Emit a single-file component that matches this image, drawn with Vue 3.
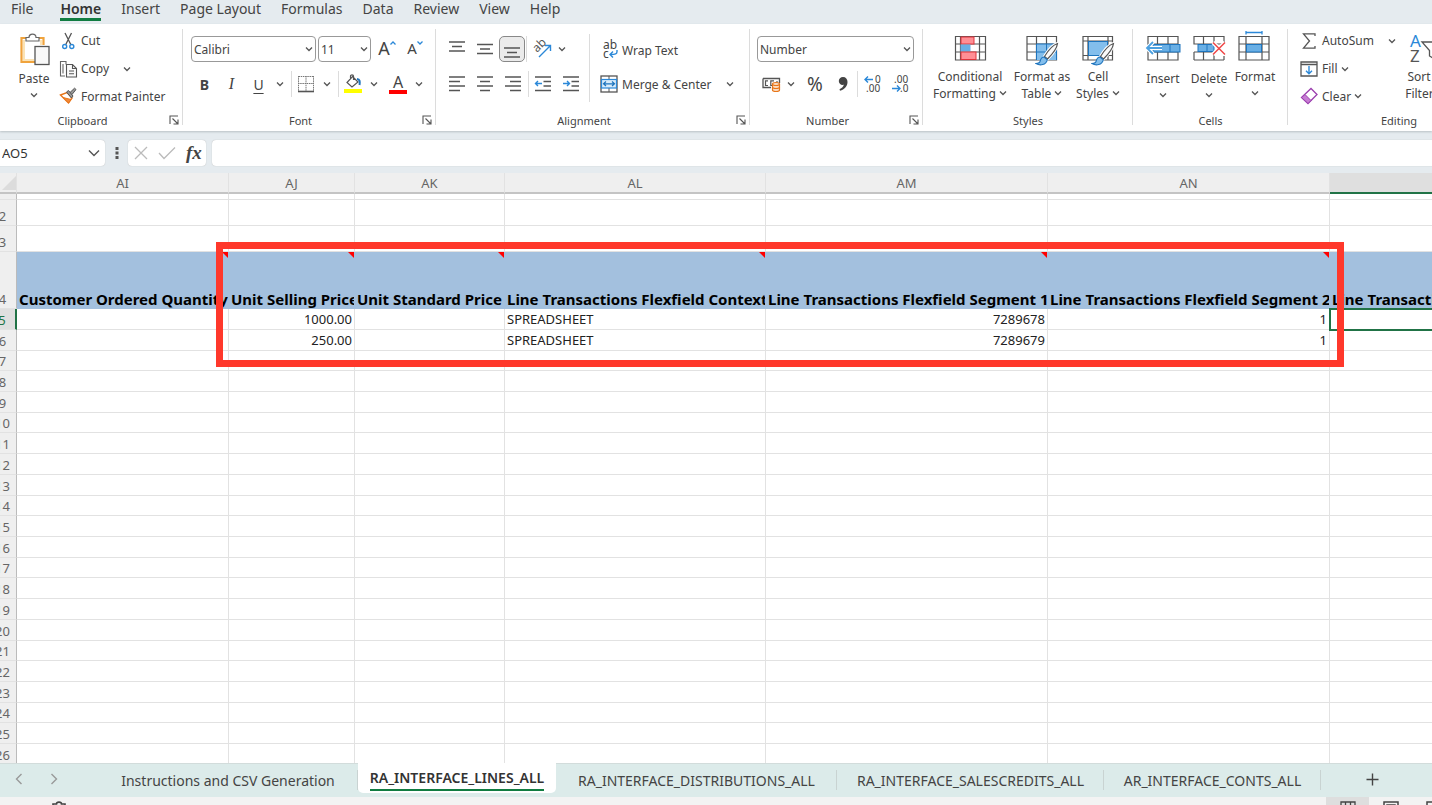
<template>
  <div class="excel">
    <svg class="defs" aria-hidden="true">
      <symbol id="chev" viewBox="0 0 8 6"><path d="M1 1.5 4 4.5 7 1.5" fill="none" stroke="#555" stroke-width="1.3" /></symbol>
      <symbol id="launch" viewBox="0 0 10 10"><path d="M1 9V1H9M3.5 3.5 8.5 8.5M9 4.5V9H4.5" fill="none" stroke="#555" stroke-width="1.1" /></symbol>
      <symbol id="brush" viewBox="0 0 24 24">
        <path d="M22.500 1.500C18 3 12.500 9.500 9.500 14.500L12.500 17C17 12.500 22 6 22.500 1.500Z" fill="#fff" stroke="#fff" stroke-width="3" />
        <path d="M22.500 1.500C18 3 12.500 9.500 9.500 14.500L12.500 17C17 12.500 22 6 22.500 1.500Z" fill="#fafafa" stroke="#555" stroke-width="1.200" />
        <path d="M9 15C6 15 5.500 17.500 5 19.500C4.500 21 3 21.500 1 21.500C5 24 11 23 12.300 17.800Z" fill="#83beec" stroke="#1e74bd" stroke-width="1.100" />
      </symbol>
    </svg>

    <nav class="menu">
      <a v-for="m in menus" :key="m" href="#" :class="{ active: m === 'Home' }">{{ m }}</a>
    </nav>

    <div class="ribbon">
      <section class="group clipboard">
        <div class="body">
          <button class="big paste">
            <svg width="31" height="34" viewBox="0 0 31 34">
              <path d="M7 5H2.500V29H16M20 5H24.500V12" fill="none" stroke="#f0a33c" stroke-width="2.200" />
              <path d="M5 7V27H15M22 7V12" fill="none" stroke="#fbe3b5" stroke-width="2" />
              <path d="M7 8V4.500H10C10 0 17 0 17 4.500H20V8Z" fill="#fff" stroke="#666" stroke-width="1.200" />
              <rect x="16" y="13.500" width="14" height="18" fill="#f8f8f8" stroke="#555" stroke-width="1.300" />
            </svg>
            <span>Paste</span>
            <svg class="chev"><use href="#chev" /></svg>
          </button>
          <div class="stack">
            <button class="line">
              <svg width="18" height="18" viewBox="0 0 18 18">
                <path d="M6 1 12 13M12.500 1 6.500 13" stroke="#555" stroke-width="1.300" />
                <circle cx="5.700" cy="14.500" r="2" fill="#fff" stroke="#2b88d8" stroke-width="1.400" />
                <circle cx="12.800" cy="14.500" r="2" fill="#fff" stroke="#2b88d8" stroke-width="1.400" />
              </svg>
              <span>Cut</span>
            </button>
            <button class="line">
              <svg width="18" height="18" viewBox="0 0 18 18">
                <path d="M6 16H1.500V1.500H7V4.500M4 4V13.500" fill="none" stroke="#666" stroke-width="1.100" />
                <path d="M7.500 4.500H13.500L17.500 8.500V17H7.500ZM13.500 4.500V8.500H17.500M10 11H15M10 13.800H15" fill="#fafafa" stroke="#555" stroke-width="1.100" />
              </svg>
              <span>Copy</span>
              <svg class="chev far"><use href="#chev" /></svg>
            </button>
            <button class="line">
              <svg width="18" height="18" viewBox="0 0 18 18">
                <path d="M1.500 8 8 5.500 13 11 9.500 16Z" fill="#fff" stroke="#e8761a" stroke-width="1.400" />
                <path d="M4 10.500 12 12.500 9.500 16Z" fill="#f0883a" stroke="#e8761a" />
                <path d="M7.500 5 9.500 3.500 14 9 12.500 11ZM11 5.500 15.500 1.200 17 2.500 13 7.500" fill="#999" stroke="#555" />
              </svg>
              <span>Format Painter</span>
            </button>
          </div>
        </div>
        <footer>Clipboard<svg class="launch"><use href="#launch" /></svg></footer>
      </section>

      <section class="group font">
        <div class="body col">
          <div class="row">
            <label class="combo fam"><select aria-label="Font"><option>Calibri</option></select><svg class="chev"><use href="#chev" /></svg></label>
            <label class="combo size"><select aria-label="Font size"><option>11</option></select><svg class="chev"><use href="#chev" /></svg></label>
            <button class="ico grow" aria-label="Increase font size"><b>A</b><svg width="6" height="4" viewBox="0 0 6 4"><path d="M.500 3.500 3 1 5.500 3.500" fill="none" stroke="#2b88d8" stroke-width="1.300" /></svg></button>
            <button class="ico grow small" aria-label="Decrease font size"><b>A</b><svg width="6" height="4" viewBox="0 0 6 4"><path d="M.500 .500 3 3 5.500 .500" fill="none" stroke="#2b88d8" stroke-width="1.300" /></svg></button>
          </div>
          <div class="row second">
            <button class="ico bold">B</button>
            <button class="ico italic">I</button>
            <button class="ico under">U</button>
            <svg class="chev mid"><use href="#chev" /></svg>
            <i class="sep"></i>
            <button class="ico" aria-label="Borders">
              <svg width="18" height="18" viewBox="0 0 18 18">
                <path d="M1.500 1.500H16.500M1.500 1V16M16.500 1V16M9 1V16M1 8.500H17" stroke="#777" stroke-dasharray="1.500 .7" />
                <path d="M1 16.500H17" stroke="#555" stroke-width="1.600" />
              </svg>
            </button>
            <svg class="chev mid"><use href="#chev" /></svg>
            <i class="sep"></i>
            <button class="ico" aria-label="Fill color">
              <svg width="18" height="20" viewBox="0 0 18 20">
                <path d="M8.500 2.500 14 8 8 13 3 8.500ZM6.500 6V2C6.500 .500 9.500 .500 9.500 2V6" fill="#fff" stroke="#555" stroke-width="1.200" />
                <path d="M13 5C16 5 16 8 15.500 11" fill="none" stroke="#1e74bd" stroke-width="2" />
                <path d="M0 15H18V19H0Z" fill="#ff0" />
              </svg>
            </button>
            <svg class="chev mid"><use href="#chev" /></svg>
            <button class="ico fcolor" aria-label="Font color"><span>A</span></button>
            <svg class="chev mid"><use href="#chev" /></svg>
          </div>
        </div>
        <footer>Font<svg class="launch"><use href="#launch" /></svg></footer>
      </section>

      <section class="group align">
        <div class="body">
          <div class="aligns">
            <div class="row">
              <button v-for="(d, i) in vAligns" :key="d" class="ico" :class="{ pressed: i === 2 }" :aria-label="'Vertical align ' + (i + 1)">
                <svg width="18" height="18" viewBox="0 0 18 18"><path :d="d" stroke="#555" stroke-width="1.400" /></svg>
              </button>
              <i class="sep"></i>
              <button class="ico" aria-label="Orientation">
                <svg width="20" height="20" viewBox="0 0 20 20">
                  <text transform="translate(6 14) rotate(-45)" font-size="12" fill="#555">ab</text>
                  <path d="M8 18 19 7M14 6.500H19.500V12" fill="none" stroke="#2b88d8" stroke-width="1.400" />
                </svg>
              </button>
              <svg class="chev mid"><use href="#chev" /></svg>
            </div>
            <div class="row second">
              <button v-for="(d, i) in hAligns" :key="d" class="ico" :aria-label="'Horizontal align ' + (i + 1)">
                <svg width="18" height="18" viewBox="0 0 18 18"><path :d="d" stroke="#555" stroke-width="1.400" /></svg>
              </button>
              <i class="sep"></i>
              <button v-for="(d, i) in indents" :key="d" class="ico" :aria-label="'Indent ' + (i + 1)">
                <svg width="18" height="18" viewBox="0 0 18 18">
                  <path d="M1 2H17M9.500 6.500H17M9.500 11H17M1 15.500H17" stroke="#555" stroke-width="1.400" />
                  <path :d="d" fill="none" stroke="#2b88d8" stroke-width="1.400" />
                </svg>
              </button>
            </div>
          </div>
          <div class="wraps">
            <button class="line">
              <svg width="18" height="20" viewBox="0 0 18 20">
                <text x="3" y="9" font-size="12" fill="#444">ab</text>
                <text x="3" y="18" font-size="12" fill="#444">c</text>
                <path d="M17 10V11.500C17 14 15.500 14.500 10.500 14.500M13 11.500 10 14.500 13 17.500" fill="none" stroke="#2b88d8" stroke-width="1.400" />
              </svg>
              <span>Wrap Text</span>
            </button>
            <button class="line">
              <svg width="18" height="18" viewBox="0 0 18 18">
                <rect x="1" y="1" width="16" height="16" fill="#fff" stroke="#555" stroke-width="1.300" />
                <path d="M9 1V5M9 13V17" stroke="#555" />
                <rect x="1.500" y="4.500" width="15" height="8.500" fill="#d9ecfa" stroke="#2b88d8" stroke-width="1.200" />
                <path d="M3.500 8.800H14.500M6 6.500 3.500 8.800 6 11M12 6.500 14.500 8.800 12 11" fill="none" stroke="#1e74bd" stroke-width="1.200" />
              </svg>
              <span>Merge &amp; Center</span>
              <svg class="chev far"><use href="#chev" /></svg>
            </button>
          </div>
        </div>
        <footer>Alignment<svg class="launch"><use href="#launch" /></svg></footer>
      </section>

      <section class="group number">
        <div class="body col">
          <div class="row">
            <label class="combo fmt"><select aria-label="Number format"><option>Number</option></select><svg class="chev"><use href="#chev" /></svg></label>
          </div>
          <div class="row second">
            <button class="ico" aria-label="Accounting format">
              <svg width="19" height="18" viewBox="0 0 19 18">
                <path d="M1 3.500H17.500V8M1 3.500V12.500H9" fill="none" stroke="#555" stroke-width="1.300" />
                <path d="M6 5.800H3.500V10.500H6M12 5.800H8.800V10.500H10M15 6V8" fill="none" stroke="#555" stroke-width="1.200" />
                <path d="M10.500 9C10.500 7 17.500 7 17.500 9V15C17.500 17 10.500 17 10.500 15Z" fill="#fbdcc0" stroke="#e8761a" stroke-width="1.200" />
                <path d="M10.500 9C10.500 11 17.500 11 17.500 9M10.500 12C10.500 14 17.500 14 17.500 12" fill="none" stroke="#e8761a" stroke-width="1.200" />
              </svg>
            </button>
            <svg class="chev mid"><use href="#chev" /></svg>
            <button class="ico percent">%</button>
            <button class="ico" aria-label="Comma style">
              <svg width="12" height="16" viewBox="0 0 12 16"><path d="M6 1C8.800 1 10.500 3 10.500 6C10.500 10 7.500 13.500 3 14.800L2.500 13.300C5 12.300 6.500 10.500 6.800 8.800C4 9.500 1.800 7.500 1.800 5C1.800 2.800 3.500 1 6 1Z" fill="#444" /></svg>
            </button>
            <i class="sep"></i>
            <button class="ico" aria-label="Increase decimal">
              <svg width="20" height="20" viewBox="0 0 20 20">
                <text x="13" y="9" font-size="10" fill="#444">0</text><text x="4" y="18" font-size="10" fill="#444">.00</text>
                <path d="M11 5.500H3M6 2.500 3 5.500 6 8.500" fill="none" stroke="#2b88d8" stroke-width="1.400" />
              </svg>
            </button>
            <button class="ico" aria-label="Decrease decimal">
              <svg width="20" height="20" viewBox="0 0 20 20">
                <text x="4" y="9" font-size="10" fill="#444">.00</text><text x="10" y="18" font-size="10" fill="#444">.0</text>
                <path d="M2 14.500H10M7 11.500 10 14.500 7 17.500" fill="none" stroke="#2b88d8" stroke-width="1.400" />
              </svg>
            </button>
          </div>
        </div>
        <footer>Number<svg class="launch"><use href="#launch" /></svg></footer>
      </section>

      <section class="group styles">
        <div class="body">
          <button class="big cond">
            <svg width="32" height="32" viewBox="0 0 32 32">
              <path d="M1.500 3.500H31.500V27H1.500ZM1.500 11H31.500M1.500 19H31.500M6.500 3.500V27M25.500 3.500V27" fill="#fff" stroke="#555" stroke-width="1.200" />
              <rect x="7" y="4" width="13" height="7" fill="#ff8f95" stroke="#e0343c" />
              <rect x="6.500" y="11.500" width="10" height="7" fill="#69afe5" />
              <rect x="7" y="19" width="15" height="7.500" fill="#ff8f95" stroke="#e0343c" />
            </svg>
            <span>Conditional</span>
            <span>Formatting <svg class="chev"><use href="#chev" /></svg></span>
          </button>
          <button class="big fmttable">
            <svg width="34" height="32" viewBox="0 0 34 32">
              <path d="M2 3.500H31.500V27H2ZM2 11H31.500M2 19H31.500M11.500 3.500V27M21.500 3.500V27" fill="#fff" stroke="#555" stroke-width="1.200" />
              <path d="M11.500 11H31.500V27H11.500Z" fill="#83beec" />
              <path d="M11.500 19H31.500M21.500 11V27M11.500 27V11H31.500V27" fill="none" stroke="#1e74bd" />
              <use href="#brush" x="10" y="9" width="24" height="24" />
            </svg>
            <span>Format as</span>
            <span>Table <svg class="chev"><use href="#chev" /></svg></span>
          </button>
          <button class="big cellst">
            <svg width="34" height="32" viewBox="0 0 34 32">
              <path d="M2 3.500H31.500V27H2ZM7 3.500V27M27 3.500V27M2 8H31.500M2 22.500H31.500" fill="#fff" stroke="#555" stroke-width="1.200" />
              <rect x="7.500" y="8.500" width="19" height="14" fill="#83beec" stroke="#1e74bd" />
              <use href="#brush" x="10" y="9" width="24" height="24" />
            </svg>
            <span>Cell</span>
            <span>Styles <svg class="chev"><use href="#chev" /></svg></span>
          </button>
        </div>
        <footer>Styles</footer>
      </section>

      <section class="group cells">
        <div class="body">
          <button class="big cell">
            <svg width="36" height="32" viewBox="0 0 36 32">
              <path d="M3 3.500H33V27H3ZM3 11H33M3 19H33M12.500 3.500V27M23 3.500V27" fill="#fff" stroke="#555" stroke-width="1.200" />
              <rect x="8" y="11.500" width="27" height="7.500" fill="#69afe5" stroke="#1e74bd" />
              <path d="M25 11.500V19" stroke="#1e74bd" />
              <path d="M17 15H2M8 9 2 15 8 21" fill="none" stroke="#fff" stroke-width="4" />
              <path d="M17 15H2M8 9 2 15 8 21" fill="none" stroke="#4ba0e0" stroke-width="1.800" />
            </svg>
            <span>Insert</span>
            <svg class="chev"><use href="#chev" /></svg>
          </button>
          <button class="big cell">
            <svg width="36" height="32" viewBox="0 0 36 32">
              <path d="M3 3.500H33M3 3V11H33V3M3 27H33M3 19V27M33 23V27M3 19H22M12.500 3V11M23 3V11M12.500 19V27M23 21V27" fill="none" stroke="#555" stroke-width="1.200" />
              <rect x="7" y="11.500" width="16" height="7" fill="#69afe5" stroke="#1e74bd" />
              <path d="M16 11.500V18.500" stroke="#1e74bd" />
              <path d="M22 9.500 34 21.500M34 9.500 22 21.500" stroke="#fff" stroke-width="4" />
              <path d="M22 9.500 34 21.500M34 9.500 22 21.500" stroke="#f04747" stroke-width="1.500" />
            </svg>
            <span>Delete</span>
            <svg class="chev"><use href="#chev" /></svg>
          </button>
          <button class="big cell">
            <svg width="36" height="32" viewBox="0 0 36 32">
              <path d="M2 3.500H32V27H2ZM2 11H32M2 19H32M9 3.500V27M25 3.500V27" fill="#fff" stroke="#555" stroke-width="1.200" />
              <rect x="9.500" y="11.500" width="15" height="7.500" fill="#69afe5" stroke="#1e74bd" />
              <path d="M9 -.500H25M9 -2V1.500M25 -2V1.500" stroke="#2b88d8" stroke-width="1.300" />
            </svg>
            <span>Format</span>
            <svg class="chev"><use href="#chev" /></svg>
          </button>
        </div>
        <footer>Cells</footer>
      </section>

      <section class="group editing">
        <div class="body">
          <div class="stack">
            <button class="line">
              <svg width="18" height="18" viewBox="0 0 18 18"><path d="M15 4V1.800H3.500L9.500 9 3.500 16.200H15V14" fill="none" stroke="#555" stroke-width="1.300" /></svg>
              <span>AutoSum</span>
              <svg class="chev far"><use href="#chev" /></svg>
            </button>
            <button class="line">
              <svg width="18" height="18" viewBox="0 0 18 18">
                <path d="M1 2H17V16H1ZM1 4.500H17" fill="#fff" stroke="#555" stroke-width="1.300" />
                <path d="M9 6V13.500M6 10.800 9 13.800 12 10.800" fill="none" stroke="#2b88d8" stroke-width="1.400" />
              </svg>
              <span>Fill</span>
              <svg class="chev near"><use href="#chev" /></svg>
            </button>
            <button class="line">
              <svg width="18" height="18" viewBox="0 0 18 18">
                <path d="M1.500 10.500 11 1.500 17 7.500 8 16.500Z" fill="#fff" stroke="#9b3fae" stroke-width="1.300" />
                <path d="M1.500 10.500 5 7.500 11 13.500 8 16.500Z" fill="#c77dd4" stroke="#9b3fae" />
              </svg>
              <span>Clear</span>
              <svg class="chev near"><use href="#chev" /></svg>
            </button>
          </div>
          <button class="big sort">
            <svg width="34" height="32" viewBox="0 0 34 32">
              <text x="2" y="14" font-size="17" fill="#2b88d8">A</text>
              <text x="2" y="29" font-size="17" fill="#555">Z</text>
              <path d="M14 9H34L26.500 17.500V26L21.500 23V17.500Z" fill="#fff" stroke="#555" stroke-width="1.300" />
            </svg>
            <span>Sort &amp;</span>
            <span>Filter <svg class="chev"><use href="#chev" /></svg></span>
          </button>
        </div>
        <footer>Editing</footer>
      </section>
    </div>

    <div class="formula-bar">
      <label class="namebox">
        <input aria-label="Name box" value="AO5" />
        <svg width="12" height="8" viewBox="0 0 12 8"><path d="M1 1.500 6 6.500 11 1.500" fill="none" stroke="#555" stroke-width="1.400" /></svg>
      </label>
      <svg class="dots" width="4" height="14" viewBox="0 0 4 14"><path d="M.500 1H3.500V4H.500ZM.500 5.500H3.500V8.500H.500ZM.500 10H3.500V13H.500Z" fill="#555" /></svg>
      <div class="fx">
        <svg width="14" height="14" viewBox="0 0 14 14"><path d="M1 1 13 13M13 1 1 13" stroke="#bbb" stroke-width="1.300" /></svg>
        <svg width="18" height="14" viewBox="0 0 18 14"><path d="M1 7 6 12.500 17 1.500" fill="none" stroke="#bbb" stroke-width="1.300" /></svg>
        <button>fx</button>
      </div>
      <input class="formula" aria-label="Formula" />
    </div>

    <main class="sheet">
      <table>
        <colgroup>
          <col class="rowhead" />
          <col v-for="c in columns" :key="c.id" :style="{ width: c.width + 'px' }" />
        </colgroup>
        <thead>
          <tr>
            <th class="corner"><svg width="14" height="14" viewBox="0 0 14 14"><path d="M14 0V14H0Z" fill="#dcdcdc" /></svg></th>
            <th v-for="c in columns" :key="c.id" :class="{ current: c.id === 'AO' }">{{ c.id }}</th>
          </tr>
        </thead>
        <tbody>
          <tr class="stub"><th></th><td v-for="c in columns" :key="c.id"></td></tr>
          <tr v-for="r in [2, 3]" :key="r" class="tall"><th>{{ r }}</th><td v-for="c in columns" :key="c.id"></td></tr>
          <tr class="titles">
            <th>4</th>
            <td v-for="c in columns" :key="c.id"><div class="note">{{ c.title }}</div></td>
          </tr>
          <tr v-for="r in rows" :key="r" :class="{ short: r % 7 === 0 || r % 7 === 3 }">
            <th :class="{ current: r === 5 }">{{ r }}</th>
            <td v-for="c in columns" :key="c.id" :class="{ num: c.num, selected: r === 5 && c.id === 'AO' }">{{ c.values?.[r - 5] }}</td>
          </tr>
        </tbody>
      </table>
      <div class="callout"></div>
    </main>

    <div class="tabs">
      <button class="arrow" aria-label="Previous sheet"><svg width="8" height="12" viewBox="0 0 8 12"><path d="M6.500 1 1.500 6 6.500 11" fill="none" stroke="#999" stroke-width="1.400" /></svg></button>
      <button class="arrow" aria-label="Next sheet"><svg width="8" height="12" viewBox="0 0 8 12"><path d="M1.500 1 6.500 6 1.500 11" fill="none" stroke="#999" stroke-width="1.400" /></svg></button>
      <button v-for="t in sheets" :key="t.name" class="tab" :class="{ on: t.on }" :style="{ width: t.width + 'px' }"><span>{{ t.name }}</span></button>
      <button class="add" aria-label="New sheet"><svg width="13" height="13" viewBox="0 0 13 13"><path d="M6.500 .500V12.500M.500 6.500H12.500" stroke="#444" stroke-width="1.400" /></svg></button>
    </div>

    <div class="status">
      <svg width="16" height="14" viewBox="0 0 16 14"><path d="M2 13V3H5.500C5.500 .500 10.500 .500 10.500 3H14V13" fill="none" stroke="#444" stroke-width="1.600" /></svg>
      <div class="views">
        <button class="on" aria-label="Normal view"><svg width="16" height="14" viewBox="0 0 16 14"><path d="M1 1H15V13H1ZM1 5H15M5.500 1V13M10.500 1V13" fill="none" stroke="#444" stroke-width="1.300" /></svg></button>
        <button aria-label="Page layout view"><svg width="16" height="14" viewBox="0 0 16 14"><path d="M1 1H15V13H1ZM4 4H12V13H4Z" fill="none" stroke="#444" stroke-width="1.500" /></svg></button>
        <button aria-label="Page break view"><svg width="16" height="14" viewBox="0 0 16 14"><path d="M1 1H15V13H1ZM8 1V7H15" fill="none" stroke="#444" stroke-width="1.500" /></svg></button>
      </div>
    </div>
  </div>
</template>

<script setup>
  const menus = ['File', 'Home', 'Insert', 'Page Layout', 'Formulas', 'Data', 'Review', 'View', 'Help']

  const vAligns = [
    'M1 2H17M4 6.500H14M1 11H17',
    'M1 4.500H17M4 9H14M1 13.500H17',
    'M1 8H17M4 12.500H14M1 17H17',
  ]
  const hAligns = [
    'M1 2H17M1 6.500H12M1 11H17M1 15.500H12',
    'M1 2H17M4 6.500H14M1 11H17M4 15.500H14',
    'M1 2H17M6 6.500H17M1 11H17M6 15.500H17',
  ]
  const indents = [
    'M8 8.500H1.500M4 6 1.500 8.500 4 11',
    'M1 8.500H7.500M5 6 7.500 8.500 5 11',
  ]

  const columns = [
    { id: 'AI', width: 212, title: 'Customer Ordered Quantity' },
    { id: 'AJ', width: 126, title: 'Unit Selling Price', num: true, values: ['1000.00', '250.00'] },
    { id: 'AK', width: 150, title: 'Unit Standard Price' },
    { id: 'AL', width: 261, title: 'Line Transactions Flexfield Context', values: ['SPREADSHEET', 'SPREADSHEET'] },
    { id: 'AM', width: 282, title: 'Line Transactions Flexfield Segment 1', num: true, values: ['7289678', '7289679'] },
    { id: 'AN', width: 282, title: 'Line Transactions Flexfield Segment 2', num: true, values: ['1', '1'] },
    { id: 'AO', width: 282, title: 'Line Transactions Flexfield Segment 3' },
  ]
  const rows = Array.from({ length: 22 }, (_, i) => i + 5)

  const sheets = [
    { name: 'Instructions and CSV Generation', width: 260 },
    { name: 'RA_INTERFACE_LINES_ALL', width: 198, on: true },
    { name: 'RA_INTERFACE_DISTRIBUTIONS_ALL', width: 281 },
    { name: 'RA_INTERFACE_SALESCREDITS_ALL', width: 267 },
    { name: 'AR_INTERFACE_CONTS_ALL', width: 217 },
  ]
</script>

<style>
  body {
    margin: 0;
    overflow: hidden;
  }
</style>

<style scoped>
  .excel {
    display: flex;
    flex-direction: column;
    height: 100vh;
    overflow: hidden;
    background: #e5ebef;
    color: #444;
    font-family: "Noto Sans", "Open Sans", sans-serif;
    font-size: 12px;
  }

  .excel * {
    box-sizing: border-box;
  }

  .defs {
    display: none;
  }

  svg {
    flex: none;
    overflow: visible;
  }

  button {
    display: flex;
    align-items: center;
    justify-content: center;
    padding: 0;
    border: 0;
    background: none;
    color: inherit;
    font: inherit;
    white-space: nowrap;
  }

  .chev {
    width: 8px;
    height: 6px;
  }

  /* menu */
  .menu {
    display: flex;
    flex: none;
    gap: 20px;
    height: 24px;
    padding-left: 11px;
  }

  .menu a {
    height: 21px;
    color: #444;
    font-size: 14px;
    line-height: 18px;
    text-decoration: none;
    white-space: nowrap;
  }

  .menu a:first-child {
    margin-right: 7px;
  }

  .menu .active {
    border-bottom: 3px solid #107c41;
    color: #333;
    font-weight: 600;
  }

  /* ribbon */
  .ribbon {
    display: flex;
    flex: none;
    height: 107px;
    background: #fff;
    box-shadow: 0 1px 2px #b9c0c5;
  }

  .group {
    display: flex;
    flex: none;
    flex-direction: column;
    position: relative;
    padding-top: 2px;
  }

  .group::after {
    content: "";
    position: absolute;
    top: 5px;
    right: 0;
    bottom: 6px;
    width: 1px;
    background: #dcdcdc;
  }

  .clipboard { width: 183px; }
  .font { width: 253px; }
  .align { width: 314px; }
  .number { width: 173px; }
  .styles { width: 210px; }
  .cells { width: 155px; }
  .editing { width: 222px; }

  .body {
    display: flex;
    height: 84px;
  }

  .col {
    flex-direction: column;
  }

  footer {
    display: flex;
    align-items: center;
    justify-content: center;
    position: relative;
    height: 20px;
    padding-right: 18px;
    font-size: 11px;
  }

  .styles footer,
  .cells footer,
  .editing footer {
    padding: 0;
  }

  .launch {
    position: absolute;
    right: 4px;
    width: 10px;
    height: 10px;
  }

  .big {
    flex-direction: column;
    justify-content: flex-start;
    flex: none;
    padding-top: 7px;
    line-height: 17px;
  }

  .big > svg:first-child {
    margin-bottom: 3px;
  }

  .big span .chev {
    vertical-align: 2px;
  }

  .paste { width: 50px; margin: 0 5px 0 9px; }
  .paste .chev,
  .cell .chev { margin-top: 5px; }
  .cond { width: 84px; margin-left: 5px; }
  .fmttable { width: 60px; }
  .cellst { width: 52px; }
  .cells .body { padding-left: 7px; }
  .cell { width: 46px; }
  .cell:not(:last-child) > svg:first-child { margin-bottom: 5px; }
  .sort { width: 50px; margin-left: 3px; }

  .stack {
    display: flex;
    flex-direction: column;
    padding-top: 1px;
  }

  .line {
    justify-content: flex-start;
    gap: 4px;
    height: 28px;
  }

  .clipboard .stack { width: 120px; margin-left: -5px; }
  .far { margin-left: 10px; }
  .near { margin-left: -1px; }
  .editing .stack { width: 97px; margin-left: 12px; }

  .row {
    display: flex;
    align-items: center;
    height: 46px;
  }

  .second {
    height: 24px;
  }

  .font .row { padding-left: 8px; }
  .number .row { padding-left: 7px; }

  .combo {
    position: relative;
    height: 26px;
  }

  .combo select {
    width: 100%;
    height: 26px;
    padding: 0 2px;
    border: 1px solid #999;
    border-radius: 4px;
    background: #fff;
    color: #444;
    font: inherit;
    appearance: none;
  }

  .combo .chev {
    position: absolute;
    top: 10px;
    right: 3px;
  }

  .fam { width: 125px; margin-right: 2px; }
  .size { width: 53px; }
  .fmt { width: 157px; }

  .ico {
    flex: none;
    width: 28px;
    height: 26px;
  }

  .sep {
    flex: none;
    width: 1px;
    height: 26px;
    background: #dcdcdc;
  }

  .mid {
    margin: 0 7px;
  }

  .grow {
    align-items: flex-start;
    margin-left: 2px;
  }

  .grow + .grow {
    margin-left: 0;
  }

  .grow b {
    font-size: 18px;
    font-weight: 400;
    line-height: 24px;
  }

  .grow svg { margin-top: 5px; }
  .small b { font-size: 15px; }
  .bold { font-size: 14px; font-weight: 700; }
  .italic { font-family: "Liberation Serif", serif; font-size: 16px; font-style: italic; }
  .under { font-size: 14px; text-decoration: underline; text-underline-offset: 3px; }
  .font .mid { margin: 0 7px 0 4px; }
  .font .second .ico { width: 27px; }
  .font .second .mid + .ico { width: 26px; }

  .fcolor span {
    width: 18px;
    border-bottom: 4px solid #f00;
    font-size: 16px;
    line-height: 15px;
  }

  .aligns {
    width: 153px;
    padding-left: 7px;
  }

  .aligns .pressed {
    width: 26px;
    border: 1px solid #888;
    border-radius: 5px;
    background: #ebebeb;
  }

  .aligns .mid { margin: 0 3px; }
  .aligns .sep { margin-left: 1px; }

  .wraps {
    flex: 1;
    margin: 8px 0 0;
    padding-left: 10px;
    border-left: 1px solid #dcdcdc;
    height: 68px;
  }

  .wraps .line { height: 32px; }
  .wraps .line + .line { height: 36px; }

  .percent { font-size: 19px; }
  .number .mid { margin: 0 4px 0 2px; }
  .number .mid + .ico { margin-left: 2px; }

  /* formula bar */
  .formula-bar {
    display: flex;
    flex: none;
    align-items: center;
    height: 42px;
    padding-top: 2px;
  }

  .namebox {
    display: flex;
    align-items: center;
    width: 105px;
    height: 26px;
    padding-right: 5px;
    border-radius: 0 4px 4px 0;
    background: #fff;
    box-shadow: 0 0 1px #aaa;
  }

  input {
    flex: 1;
    min-width: 0;
    padding: 0 2px;
    border: 0;
    background: none;
    color: #333;
    font: inherit;
    font-size: 13px;
  }

  .dots {
    margin: 0 9px 0 10px;
  }

  .fx {
    display: flex;
    align-items: center;
    gap: 10px;
    width: 78px;
    height: 26px;
    padding: 0 6px;
    border-radius: 4px;
    background: #fff;
    box-shadow: 0 0 1px #aaa;
  }

  .fx button {
    font: italic 700 19px "Liberation Serif", serif;
  }

  .formula {
    height: 26px;
    margin-left: 6px;
    border-radius: 4px 0 0 4px;
    background: #fff;
    box-shadow: 0 0 1px #aaa;
  }

  /* sheet */
  .sheet {
    flex: 1;
    position: relative;
    min-height: 0;
    overflow: hidden;
    background: #fff;
  }

  table {
    width: 1623px;
    margin-left: -11px;
    border-collapse: separate;
    border-spacing: 0;
    table-layout: fixed;
  }

  .rowhead {
    width: 28px;
  }

  th,
  td {
    padding: 0;
    border-right: 1px solid #e2e2e2;
    border-bottom: 1px solid #e2e2e2;
    font-size: 13px;
    font-weight: 400;
    line-height: 18px;
    white-space: nowrap;
  }

  td {
    padding: 0 2px;
    overflow: hidden;
    color: #222;
  }

  tr {
    height: 21px;
  }

  .short {
    height: 20px;
  }

  tbody th {
    border-right: 1px solid #bbb;
    background: #efefef;
    color: #666;
    vertical-align: bottom;
  }

  thead th {
    border-bottom: 2px solid #c4c4c4;
    background: #efefef;
    color: #666;
  }

  thead .current {
    border-bottom-color: #217346;
    background: #dfdfdf;
  }

  tbody .current {
    border-right: 2px solid #217346;
    background: #dfdfdf;
    color: #217346;
  }

  .corner {
    line-height: 0;
    text-align: right;
  }

  .stub { height: 6px; }
  .stub th,
  .stub td { line-height: 5px; }
  .tall { height: 26px; }
  .titles { height: 57px; }

  .titles td {
    height: 57px;
    padding: 0;
    border-color: #a3c0de;
    background: #a3c0de;
    color: #000;
    vertical-align: bottom;
  }

  .note {
    display: flex;
    align-items: flex-end;
    position: relative;
    height: 56px;
    padding-left: 2px;
    overflow: hidden;
    font-size: 15px;
    font-weight: 700;
  }

  .note::after {
    content: "";
    position: absolute;
    top: 0;
    right: 0;
    border-top: 6px solid #f00;
    border-left: 6px solid transparent;
  }

  .num {
    text-align: right;
  }

  .selected {
    outline: 2px solid #217346;
    outline-offset: -1px;
  }

  .callout {
    position: absolute;
    top: 69px;
    left: 216px;
    width: 1128px;
    height: 125px;
    border: 7px solid #ff382b;
  }

  /* sheet tabs */
  .tabs {
    display: flex;
    flex: none;
    align-items: flex-start;
    height: 34px;
    padding-left: 1px;
    background: #dcebea;
    box-shadow: inset 0 1px #d2dcdb;
  }

  .arrow {
    width: 35px;
    height: 32px;
  }

  .arrow + .tab {
    margin-left: 27px;
  }

  .tab {
    flex: none;
    position: relative;
    height: 34px;
    font-size: 14px;
  }

  .tab::after {
    content: "";
    position: absolute;
    top: 7px;
    right: 0;
    width: 1px;
    height: 20px;
    background: #c9d3d2;
  }

  .tab.on {
    height: 30px;
    border-radius: 0 0 5px 5px;
    background: #fff;
    color: #333;
    font-weight: 600;
  }

  .tab.on::after {
    display: none;
  }

  .tab.on span {
    border-bottom: 2px solid #107c41;
    line-height: 23px;
  }

  .add {
    width: 102px;
    height: 32px;
  }

  /* status bar */
  .status {
    display: flex;
    flex: none;
    justify-content: space-between;
    height: 8px;
    padding-left: 51px;
    overflow: hidden;
    background: #f3f3f3;
  }

  .status > svg {
    margin-top: 4px;
  }

  .views {
    display: flex;
    width: 106px;
  }

  .views button {
    flex: none;
    align-items: flex-start;
    width: 43px;
    height: 24px;
    padding-top: 4px;
  }

  .views .on {
    background: #dedede;
  }
</style>
